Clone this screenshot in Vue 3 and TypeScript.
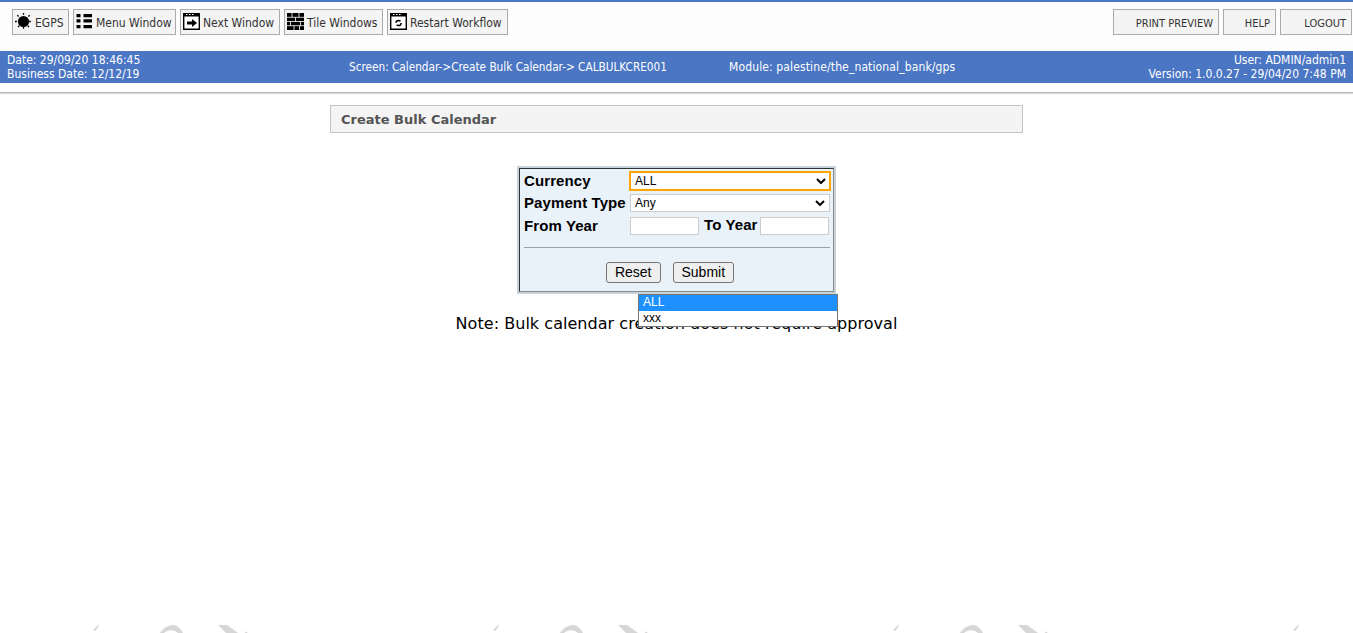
<script setup lang="ts">
const wmTiles = [0, 400, 800, 1200];
</script>

<template>
  <div class="page">
    <svg class="watermark" width="1353" height="633" viewBox="0 0 1353 633" aria-hidden="true">
      <g v-for="x in wmTiles" :key="x" :transform="`translate(${x} 0)`" fill="#d6d6d6">
        <path d="M93 630 L98 625 L99 626 L95 631 Z" />
        <path d="M160 633 C163 628 168 625 174 625 C177 625 180 628 183 633 L178 633 C173 629 168 630 164 633 Z" />
        <path d="M218 625 L227 625 L238 633 L226 633 Z" />
        <path d="M245 631 L248 633 L245 633 Z" />
      </g>
    </svg>

    <header class="top">
      <div class="toolbar">
        <div class="group">
          <button class="tool">
            <svg class="ico" viewBox="0 0 18 18"><circle cx="8.500" cy="8.500" r="5.600" fill="#000" /><g stroke="#000" stroke-width="1.300" stroke-dasharray="1.800 1.200"><path d="M8.500 0V3M8.500 14v3M0 8.500h3M14 8.500h3M2.300 2.300l2 2M12.700 12.700l2 2M14.700 2.300l-2 2M4.300 12.700l-2 2" /></g></svg>
            EGPS
          </button>
          <button class="tool">
            <svg class="ico" viewBox="0 0 18 18"><path d="M.5 1h4v3.300h-4zM7.500 1H16v3.300H7.500zM.5 6.300h4v3.300h-4zM7.500 6.300H16v3.300H7.500zM.5 12h4v3.300h-4zM7.500 12H16v3.300H7.500z" fill="#000" /></svg>
            Menu Window
          </button>
          <button class="tool">
            <svg class="ico" viewBox="0 0 18 18"><path d="M.7.700h15.600v15.600H.7z" fill="#fff" stroke="#000" stroke-width="1.400" /><path d="M1 .5h15v3H1z" fill="#000" /><path d="M3 1.500h1.500M6 1.500h1.500M9 1.500h1.500" stroke="#fff" /><path d="M4 8.500h5V6l5 4-5 4v-2.500H4z" fill="#000" /></svg>
            Next Window
          </button>
          <button class="tool">
            <svg class="ico" viewBox="0 0 18 18"><path d="M0 0h17v17H0z" fill="#000" /><path d="M0 4.300h17M0 8.500h17M0 12.700h17M5 0v4.300M12 0v4.300M8.500 4.300v4.200M3.500 8.500v4.200M13.500 8.500v4.200M7 12.700V17M12.500 12.700V17" stroke="#fff" stroke-width="0.800" /></svg>
            Tile Windows
          </button>
          <button class="tool">
            <svg class="ico" viewBox="0 0 18 18"><path d="M.7.700h15.600v15.600H.7z" fill="#fff" stroke="#000" stroke-width="1.400" /><path d="M1 .5h15v3H1z" fill="#000" /><path d="M3 1.500h1.500M6 1.500h1.500M9 1.500h1.500" stroke="#fff" /><circle cx="8.500" cy="10" r="2.600" fill="none" stroke="#000" stroke-width="1.500" stroke-dasharray="6 2.200" /></svg>
            Restart Workflow
          </button>
        </div>
        <div class="group right">
          <button class="tool plain print">PRINT PREVIEW</button>
          <button class="tool plain help">HELP</button>
          <button class="tool plain logout">LOGOUT</button>
        </div>
      </div>

      <div class="status">
        <div class="st-left">
          <div>Date: 29/09/20 18:46:45</div>
          <div>Business Date: 12/12/19</div>
        </div>
        <div class="st-screen">Screen: Calendar-&gt;Create Bulk Calendar-&gt; CALBULKCRE001</div>
        <div class="st-module">Module: palestine/the_national_bank/gps</div>
        <div class="st-right">
          <div>User: ADMIN/admin1</div>
          <div>Version: 1.0.0.27 - 29/04/20 7:48 PM</div>
        </div>
      </div>
      <div class="under"></div>
    </header>

    <main class="content">
      <h1 class="title">Create Bulk Calendar</h1>

      <div class="form-wrap">
        <form class="card" @submit.prevent>
          <div class="row">
            <span class="lbl">Currency</span>
            <div class="sel focused"><span>ALL</span><svg class="chev" viewBox="0 0 10 6"><path d="M1 1l4 4 4-4" fill="none" stroke="#000" stroke-width="2" /></svg></div>
          </div>
          <div class="row">
            <span class="lbl">Payment Type</span>
            <div class="sel"><span>Any</span><svg class="chev" viewBox="0 0 10 6"><path d="M1 1l4 4 4-4" fill="none" stroke="#000" stroke-width="2" /></svg></div>
          </div>
          <div class="row years">
            <span class="lbl">From Year</span>
            <input class="yr" type="text" />
            <span class="lbl to">To Year</span>
            <input class="yr" type="text" />
          </div>
          <hr class="rule" />
          <div class="actions">
            <button class="btn" type="button">Reset</button>
            <button class="btn" type="submit">Submit</button>
          </div>

          <ul class="dropdown">
            <li class="on">ALL</li>
            <li>xxx</li>
          </ul>
        </form>
      </div>

      <p class="note">Note: Bulk calendar creation does not require approval</p>
    </main>
  </div>
</template>

<style>
html, body { margin: 0; background: #fff; overflow: hidden; }
</style>

<style scoped>
.page {
  position: relative;
  width: 1353px;
  height: 633px;
  overflow: hidden;
  background: #fff;
  font-family: "DejaVu Sans", sans-serif;
}
.watermark { position: absolute; left: 0; top: 0; }
.top { position: relative; background: #fdfdfd; border-top: 2px solid #4a76c4; }
.toolbar {
  display: flex;
  justify-content: space-between;
  height: 49px;
  padding: 7px 1px 0 12px;
  box-sizing: border-box;
}
.group { display: flex; gap: 4px; height: 26px; }
.tool {
  display: flex;
  align-items: center;
  gap: 2px;
  box-sizing: border-box;
  height: 26px;
  padding: 2px 2px 0;
  border: 1px solid #ababab;
  background: #f4f4f4;
  color: #333;
  font: 12px "DejaVu Sans Condensed", "DejaVu Sans", sans-serif;
  font-stretch: condensed;
  white-space: nowrap;
}
.tool:nth-child(1) { width: 57px; }
.tool:nth-child(2) { width: 103px; }
.tool:nth-child(3) { width: 100px; }
.tool:nth-child(4) { width: 99px; }
.tool:nth-child(5) { width: 121px; }
.ico { width: 18px; height: 18px; flex: none; margin-top: -2px; }
.tool.plain { justify-content: flex-end; padding: 2px 5px 0 0; font-size: 11px; }
.print { width: 106px !important; }
.help { width: 53px !important; }
.logout { width: 72px !important; }
.status {
  display: grid;
  grid-template-columns: 342px 380px 1fr auto;
  align-items: center;
  height: 32px;
  padding: 0 7px;
  box-sizing: border-box;
  background: #4a76c4;
  color: #fff;
  font: 12px/14px "DejaVu Sans Condensed", "DejaVu Sans", sans-serif;
  font-stretch: condensed;
}
.st-screen { font-size: 11.700px; }
.st-module { letter-spacing: 0.130px; }
.st-right { text-align: right; }
.under { height: 9px; background: #fdfdfd; border-bottom: 1px solid #b5b5b5; box-shadow: 0 1px 1px #ddd; }
.content { position: relative; }
.title {
  box-sizing: border-box;
  width: 693px;
  height: 28px;
  margin: 12px 0 0 330px;
  padding: 0 10px;
  border: 1px solid #c4c4c4;
  background: #f4f4f4;
  color: #555;
  font: bold 13px/28px "DejaVu Sans", sans-serif;
}
.form-wrap { display: flex; justify-content: center; margin-top: 35px; }
.card {
  position: relative;
  box-sizing: border-box;
  width: 315px;
  height: 124px;
  padding: 1px 3px 0 4px;
  border: 1px solid;
  border-color: #333 #8a8a8a #8a8a8a #333;
  outline: 2px solid #c8d2dc;
  background: #e9f1f9;
  font-family: "Liberation Sans", sans-serif;
}
.row { display: flex; align-items: center; height: 22px; }
.row.years { height: 24px; }
.lbl { width: 106px; flex: none; margin-top: -2px; font-size: 15px; letter-spacing: 0.100px; font-weight: bold; color: #000; white-space: nowrap; }
.sel {
  display: flex;
  flex: none;
  align-items: center;
  justify-content: space-between;
  box-sizing: border-box;
  width: 200px;
  height: 18px;
  padding: 0 4px;
  border: 1px solid #ccc;
  background: #fff;
  font-size: 12px;
  color: #000;
}
.sel.focused { width: 202px; height: 20px; margin-left: -1px; border: 2px solid #ffa500; padding: 0 3px 0 4px; }
.chev { width: 10px; height: 6px; }
.yr { box-sizing: border-box; flex: none; width: 69px; height: 18px; padding: 0; border: 1px solid #ccc; background: #fff; }
.lbl.to { width: auto; margin: -4px 2px 0 5px; }
.rule { height: 1px; margin: 9px 0 0; border: 0; background: #a0a0a0; width: 306px; }
.actions { display: flex; justify-content: center; gap: 12px; margin-top: 14px; padding-right: 14px; }
.btn {
  box-sizing: border-box;
  height: 21px;
  padding: 0 8px 1px;
  border: 1px solid #767676;
  border-radius: 3px;
  background: #efefef;
  color: #000;
  font: 14px "Liberation Sans", sans-serif;
}
.dropdown {
  position: absolute;
  left: 118px;
  top: 125px;
  width: 200px;
  margin: 0;
  padding: 0;
  list-style: none;
  box-sizing: border-box;
  border: 1px solid #767676;
  background: #fff;
  font-size: 12px;
  color: #000;
}
.dropdown li { height: 15.500px; line-height: 15.500px; padding-left: 4px; }
.dropdown li.on { background: #1e90ff; color: #fff; }
.note {
  margin: 22px 0 0;
  text-align: center;
  font-size: 16px;
  letter-spacing: 0.040px;
  line-height: 20px;
  color: #000;
}
</style>
